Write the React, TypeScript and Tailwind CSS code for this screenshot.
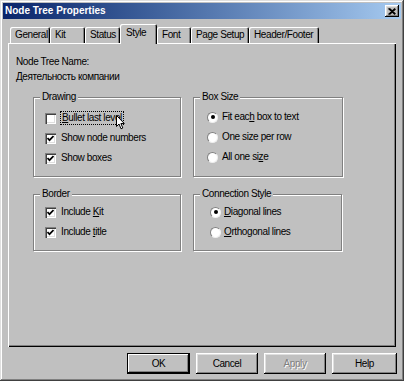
const raised =
  "shadow-[inset_-1px_-1px_0_#000,inset_1px_1px_0_#fff,inset_-2px_-2px_0_#808080,inset_2px_2px_0_#dfdfdf]";

const CheckBox = ({ checked }: { checked: boolean }) => (
  <span className="w-[11px] h-[11px] shrink-0 bg-white flex items-center justify-center shadow-[inset_1px_1px_0_#808080,inset_2px_2px_0_#404040,inset_-1px_-1px_0_#fff,inset_-2px_-2px_0_#dfdfdf]">
    {checked && (
      <svg width="7" height="7" viewBox="0 0 7 7">
        <polyline points="0.5,3 2.5,5.2 6.5,1" fill="none" stroke="#000" strokeWidth="1.7" />
      </svg>
    )}
  </span>
);

const Radio = ({ checked }: { checked: boolean }) => (
  <span className="w-[11px] h-[11px] shrink-0 rounded-full bg-white border border-t-[#808080] border-l-[#808080] border-r-[#efefef] border-b-[#efefef] flex items-center justify-center">
    {checked && <span className="w-[4px] h-[4px] rounded-full bg-black" />}
  </span>
);

const Group = ({
  title,
  w,
  h,
  pt,
  children,
}: {
  title: string;
  w: string;
  h: string;
  pt: string;
  children: React.ReactNode;
}) => (
  <fieldset className={`${w} ${h} ${pt} border border-[#808080] shadow-[1px_1px_0_#fff,inset_1px_1px_0_#fff] flex flex-col`}>
    <legend className="ml-[6px] px-[2px] bg-[#c0c0c0]">{title}</legend>
    {children}
  </fieldset>
);

const Row = ({ children, cls }: { children: React.ReactNode; cls: string }) => (
  <div className={`h-[20px] flex items-center ${cls}`}>{children}</div>
);

export default function App() {
  const tabs = [
    { label: "General", w: "w-[40px]" },
    { label: "Kit", w: "w-[35px]" },
    { label: "Status", w: "w-[35px]" },
    { label: "Style", w: "w-[37px]", active: true },
    { label: "Font", w: "w-[34px]" },
    { label: "Page Setup", w: "w-[58px]" },
    { label: "Header/Footer", w: "w-[70px]" },
  ];

  return (
    <div className="w-[404px] h-[381px] bg-[#c0c0c0] p-[3px] flex flex-col relative font-['Liberation_Sans',Arial,sans-serif] text-[10px] leading-[12px] tracking-[-0.4px] text-black shadow-[inset_-1px_-1px_0_#404040,inset_1px_1px_0_#dfdfdf,inset_-2px_-2px_0_#808080,inset_2px_2px_0_#fff]">
      {/* title bar */}
      <div className="h-[16px] flex items-center justify-between pl-[2px] pr-[2px] bg-linear-to-r from-[#0a246a] to-[#a6caf0]">
        <span className="text-white font-bold tracking-normal">Node Tree Properties</span>
        <span className={`w-[14px] h-[12px] bg-[#c0c0c0] flex items-center justify-center ${raised}`}>
          <svg width="8" height="7" viewBox="0 0 8 7">
            <path d="M0.5 0.5 L7 6.5 M1.5 0.5 L7.5 6 M7 0.5 L0.5 6.5 M7.5 1 L1.5 6.5" stroke="#000" strokeWidth="1.2" fill="none" />
          </svg>
        </span>
      </div>

      <div className="px-[5px] flex flex-col">
        {/* tabs */}
        <div className="mt-[5px] pl-[2px] h-[19px] flex items-end relative z-10">
          {tabs.map((t) =>
            t.active ? (
              <div
                key={t.label}
                className={`${t.w} h-[20px] -mb-[1px] pl-[6px] pt-[3px] bg-[#c0c0c0] rounded-t-[2px] shadow-[inset_1px_1px_0_#fff,inset_-1px_0_0_#000,inset_-2px_0_0_#808080]`}
              >
                {t.label}
              </div>
            ) : (
              <div
                key={t.label}
                className={`${t.w} h-[16px] pl-[5px] pt-[2px] rounded-t-[2px] shadow-[inset_1px_1px_0_#fff,inset_-1px_0_0_#000,inset_-2px_0_0_#808080]`}
              >
                {t.label}
              </div>
            )
          )}
        </div>

        {/* panel */}
        <div className="h-[304px] pt-[13px] pl-[8px] flex flex-col shadow-[inset_1px_1px_0_#fff,inset_-1px_-1px_0_#000,inset_-2px_-2px_0_#808080]">
          <div>Node Tree Name:</div>
          <div className="mt-[3px]">Деятельность компании</div>

          <div className="mt-[8px] pl-[17px] flex gap-[12px]">
            <Group title="Drawing" w="w-[148px]" h="h-[86px]" pt="pt-[5px]">
              <Row cls="pl-[11px] gap-[5px]">
                <CheckBox checked={false} />
                <span className="outline outline-dotted outline-1 outline-black px-[1px]">
                  <u>B</u>ullet last level
                </span>
              </Row>
              <Row cls="pl-[11px] gap-[5px]">
                <CheckBox checked />
                <span>Show node numbers</span>
              </Row>
              <Row cls="pl-[11px] gap-[5px]">
                <CheckBox checked />
                <span>Show boxes</span>
              </Row>
            </Group>
            <Group title="Box Size" w="w-[150px]" h="h-[86px]" pt="pt-[4px]">
              <Row cls="pl-[13px] gap-[4px]">
                <Radio checked />
                <span>
                  Fit eac<u>h</u> box to text
                </span>
              </Row>
              <Row cls="pl-[13px] gap-[4px]">
                <Radio checked={false} />
                <span>One size per row</span>
              </Row>
              <Row cls="pl-[13px] gap-[4px]">
                <Radio checked={false} />
                <span>
                  All one si<u>z</u>e
                </span>
              </Row>
            </Group>
          </div>

          <div className="mt-[11px] pl-[17px] flex gap-[12px]">
            <Group title="Border" w="w-[148px]" h="h-[63px]" pt="pt-[2px]">
              <Row cls="pl-[11px] gap-[5px]">
                <CheckBox checked />
                <span>
                  Include <u>K</u>it
                </span>
              </Row>
              <Row cls="pl-[11px] gap-[5px]">
                <CheckBox checked />
                <span>
                  Include <u>t</u>itle
                </span>
              </Row>
            </Group>
            <Group title="Connection Style" w="w-[149px]" h="h-[63px]" pt="pt-[2px]">
              <Row cls="pl-[16px] gap-[3px]">
                <Radio checked />
                <span>
                  <u>D</u>iagonal lines
                </span>
              </Row>
              <Row cls="pl-[16px] gap-[3px]">
                <Radio checked={false} />
                <span>
                  <u>O</u>rthogonal lines
                </span>
              </Row>
            </Group>
          </div>
        </div>

        {/* buttons */}
        <div className="mt-[6px] -mr-[1px] flex justify-end gap-[6px]">
          <button className="w-[63px] h-[21px] border border-black bg-[#c0c0c0] shadow-[inset_-1px_-1px_0_#000,inset_1px_1px_0_#fff,inset_-2px_-2px_0_#808080]">
            OK
          </button>
          <button className={`w-[62px] h-[21px] bg-[#c0c0c0] ${raised}`}>Cancel</button>
          <button className={`w-[62px] h-[21px] bg-[#c0c0c0] text-[#808080] [text-shadow:1px_1px_0_#fff] ${raised}`}>
            Apply
          </button>
          <button className={`w-[65px] h-[21px] bg-[#c0c0c0] ${raised}`}>Help</button>
        </div>
      </div>

      {/* mouse pointer */}
      <svg className="absolute left-[116px] top-[115px]" width="10" height="15" viewBox="0 0 10 15">
        <path d="M0.5 0.5 L0.5 11.5 L3 9 L5 13.8 L6.8 13 L4.9 8.5 L8.3 8.5 Z" fill="#fff" stroke="#000" strokeWidth="1" />
      </svg>
    </div>
  );
}
